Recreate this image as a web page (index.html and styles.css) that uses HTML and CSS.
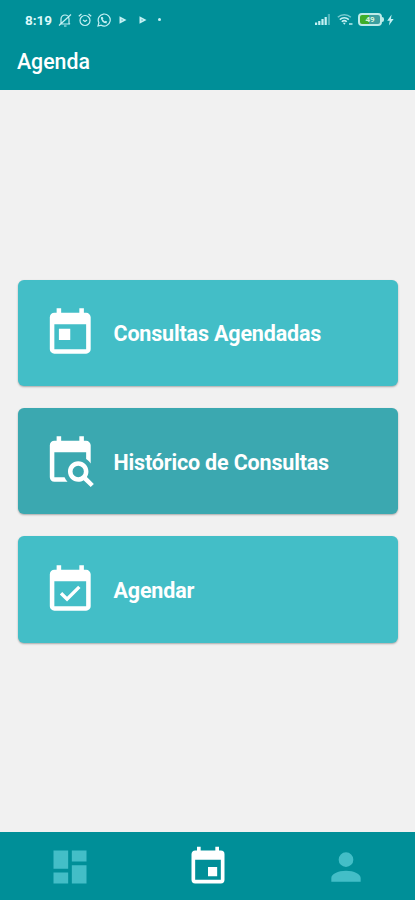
FILE: index.html
```html
<!DOCTYPE html>
<html lang="pt-BR">
<head>
    <meta charset="UTF-8">
    <meta name="viewport" content="width=device-width, initial-scale=1.0">
    <title>Agenda</title>

    <link rel="stylesheet" href="styles.css">
</head>
<body>

<header class="header">
    <div class="status-bar">
        <span class="time">8:19</span>
        <div class="status-left">
            <svg width="14" height="14" viewBox="0 0 14 14" fill="none" stroke="currentColor" stroke-width="1.2">
                <path d="M3 10.500V6a4 4 0 0 1 8 0v4.500l1 .5H2zM6 13h2.500M1 12.500L13 1.500"/>
            </svg>
            <svg width="14" height="14" viewBox="0 0 14 14" fill="none" stroke="currentColor" stroke-width="1.2">
                <circle cx="7" cy="7.500" r="5"/>
                <path d="M5 7l2 1.500L9 7M.8 3.300L3.500 1M13.200 3.300L10.500 1"/>
            </svg>
            <svg width="14" height="14" viewBox="0 0 14 14" fill="none" stroke="currentColor" stroke-width="1.2">
                <path d="M1 13l.9-3.200A6 6 0 1 1 4.200 12.200z"/>
                <path d="M4.700 4.200c-.5 2.800 2.500 5.800 5 5.300M4.800 4.200l1 1.600M9.700 9.500L8.300 8.400" stroke-width="1.6"/>
            </svg>
        </div>
        <div class="status-play">
            <svg width="8" height="8" viewBox="0 0 8 8"><path d="M.5 .3L7.500 4 .5 7.700z" fill="currentColor"/><path d="M2.600 3.300v1.400L4 4z" fill="#008f98"/></svg>
            <svg width="8" height="8" viewBox="0 0 8 8"><path d="M.5 .3L7.500 4 .5 7.700z" fill="currentColor"/><path d="M2.600 3.300v1.400L4 4z" fill="#008f98"/></svg>
            <span class="dot"></span>
        </div>
        <div class="status-right">
            <svg class="signal" width="16" height="11" viewBox="0 0 16 11" fill="currentColor">
                <path d="M0 8.500h2.200V11H0zM3.200 7h2.200v4H3.200zM6.400 5h2.200v6H6.400zM9.600 3h2.200v8H9.600z"/>
                <path d="M12.800 0H15v11h-2.200z" opacity=".4"/>
            </svg>
            <svg class="wifi" width="16" height="13" viewBox="0 0 16 13" fill="none" stroke="currentColor" stroke-width="1.5">
                <path d="M.8 4.200a9.500 9.500 0 0 1 13 0" opacity=".6"/>
                <path d="M2.800 6.600a6.500 6.500 0 0 1 9 0M4.800 8.800a3.600 3.600 0 0 1 5 0"/>
                <path d="M5.800 9.800h3L7.300 11.800z" fill="currentColor" stroke="none"/>
                <path d="M12 11h3.500" opacity=".7" stroke-width="2"/>
            </svg>
            <div class="battery">
                <span class="battery-level">49</span>
            </div>
            <svg class="bolt" width="7" height="12" viewBox="0 0 7 12" fill="currentColor">
                <path d="M4.600.5L.2 6.800h2.600L1.900 11.500l4.700-6.400H3.900z"/>
            </svg>
        </div>
    </div>
    <h1 class="title">Agenda</h1>
</header>

<main class="menu">
    <a class="card">
        <svg class="card-icon" viewBox="0 0 24 24">
            <path d="M19 3h-1V1h-2v2H8V1H6v2H5c-1.110 0-2 .9-2 2v14a2 2 0 0 0 2 2h14a2 2 0 0 0 2-2V5a2 2 0 0 0-2-2zm0 16H5V8h14v11zM7 10h5v5H7z"/>
        </svg>
        <span class="card-text">Consultas Agendadas</span>
    </a>
    <a class="card card-dark">
        <svg class="card-icon" viewBox="0 0 24 24">
            <path d="M15.500 12C18 12 20 14 20 16.500c0 .88-.25 1.710-.69 2.400L22.390 22 21 23.390l-3.120-3.070c-.69.43-1.510.68-2.380.68C13 21 11 19 11 16.500S13 12 15.500 12m0 2a2.500 2.500 0 1 0 0 5 2.500 2.500 0 0 0 0-5M19 8H5v11h4.500c.31.75.76 1.420 1.310 2H5c-1.110 0-2-.9-2-2V5c0-1.110.89-2 2-2h1V1h2v2h8V1h2v2h1a2 2 0 0 1 2 2v8.030c-.5-.8-1.190-1.490-2-2.030V8z"/>
        </svg>
        <span class="card-text">Histórico de Consultas</span>
    </a>
    <a class="card">
        <svg class="card-icon" viewBox="0 0 24 24">
            <path d="M19 3h-1V1h-2v2H8V1H6v2H5c-1.110 0-2 .9-2 2v14a2 2 0 0 0 2 2h14a2 2 0 0 0 2-2V5a2 2 0 0 0-2-2zm0 16H5V8h14v11zM16.530 11.060L15.470 10l-4.880 4.880-2.120-2.120-1.060 1.060L10.590 17z"/>
        </svg>
        <span class="card-text">Agendar</span>
    </a>
</main>

<nav class="tabs">
    <a class="tab">
        <svg viewBox="0 0 24 24"><path d="M3 13h8V3H3zM3 21h8v-6H3zM13 21h8V11h-8zM13 3v6h8V3z"/></svg>
    </a>
    <a class="tab active">
        <svg viewBox="0 0 24 24"><path d="M19 19H5V8h14m-3-7v2H8V1H6v2H5c-1.110 0-2 .89-2 2v14a2 2 0 0 0 2 2h14a2 2 0 0 0 2-2V5a2 2 0 0 0-2-2h-1V1m-1 11h-5v5h5z"/></svg>
    </a>
    <a class="tab">
        <svg viewBox="0 0 24 24"><path d="M12 4a4 4 0 1 1 0 8 4 4 0 0 1 0-8m0 10c4.420 0 8 1.790 8 4v2H4v-2c0-2.210 3.580-4 8-4z"/></svg>
    </a>
</nav>

</body>
</html>
```

FILE: styles.css
```css
*{
    margin: 0;
    padding: 0;
    box-sizing: border-box;
}

body{
    display: flex;
    flex-direction: column;
    height: 900px;
    background-color: #f1f1f1;
    font-family: Roboto, sans-serif;
    color: white;
}

svg{
    display: block;
    flex: none;
}

.header{
    height: 90px;
    background-color: #008f98;
}

.status-bar{
    display: flex;
    align-items: center;
    height: 39px;
    padding: 0 21px 0 25px;
    color: #c5f0f3;
}

.time{
    width: 33px;
    font-size: 13.5px;
    font-weight: 700;
    color: #dcf8fa;
}

.status-left{
    display: flex;
    gap: 5.5px;
}

.status-play{
    display: flex;
    align-items: center;
    gap: 11.5px;
    margin-left: 8px;
}

.dot{
    width: 3px;
    height: 3px;
    border-radius: 50%;
    background-color: currentColor;
}

.status-right{
    display: flex;
    align-items: center;
    margin-left: auto;
}

.signal{
    margin-right: 6px;
}

.wifi{
    margin-right: 5px;
}

.battery{
    position: relative;
    width: 24px;
    height: 13px;
    margin-right: 5px;
    border: 2px solid #bdebe9;
    border-radius: 4px;
    background: linear-gradient(to right, #3fae2a 45%, #3b9fa0 45%);
}

.battery::after{
    content: "";
    position: absolute;
    right: -4px;
    top: 2px;
    width: 2px;
    height: 5px;
    border-radius: 0 2px 2px 0;
    background-color: #bdebe9;
}

.battery-level{
    display: block;
    font-size: 8px;
    font-weight: 700;
    line-height: 9px;
    text-align: center;
    color: #d8f3d8;
}

.title{
    padding-left: 17px;
    font-size: 21.3px;
    font-weight: 500;
    line-height: 46px;
}

.menu{
    display: flex;
    flex: 1;
    flex-direction: column;
    justify-content: center;
    gap: 21.75px;
    padding: 0 17px 0 17.5px;
}

.card{
    display: flex;
    align-items: center;
    height: 106.5px;
    padding-left: 25.5px;
    border-radius: 6px;
    background-color: #43bec7;
    box-shadow: 0 1px 2px rgba(0, 0, 0, 0.3);
}

.card-dark{
    background-color: #3ba8b0;
}

.card-icon{
    width: 54.5px;
    height: 54.5px;
    margin-top: 1px;
    fill: white;
}

.card-text{
    margin-left: 16px;
    padding-top: 2px;
    font-size: 21.5px;
    font-weight: 700;
    letter-spacing: -0.17px;
}

.tabs{
    display: flex;
    height: 68px;
    padding: 1px 0 0 1px;
    background-color: #008f98;
}

.tab{
    display: flex;
    flex: 1;
    align-items: center;
    justify-content: center;
}

.tab svg{
    width: 44px;
    height: 44px;
    fill: #43bec7;
}

.tab.active svg{
    fill: white;
}
```
